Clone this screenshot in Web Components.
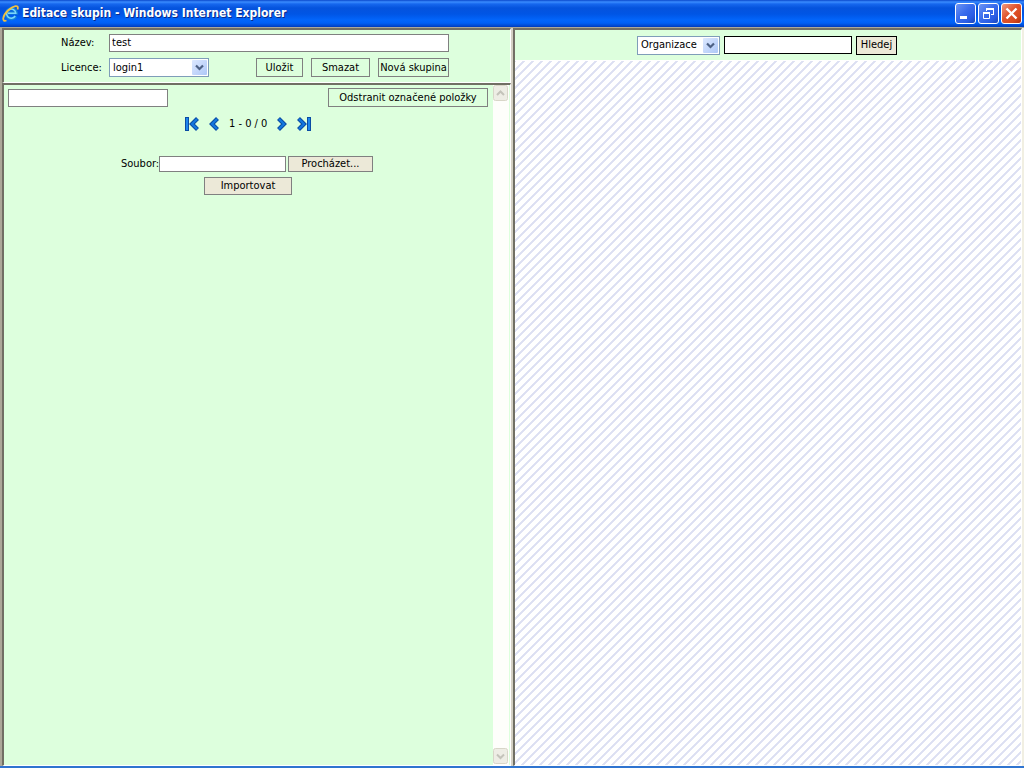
<!DOCTYPE html>
<html lang="cs"><head><meta charset="utf-8"><title>Editace skupin</title>
<style>
html,body{height:100%;margin:0}
body{font:11px/14px "DejaVu Sans Condensed","Open Sans",sans-serif;color:#000}
</style></head><body><app-window></app-window>
<script>
const define=(name,html,init)=>customElements.define(name,class extends HTMLElement{
  constructor(){super();const t=document.createElement('template');t.innerHTML=html;
    this.attachShadow({mode:'open'}).append(t.content.cloneNode(true));if(init)init(this,this.shadowRoot);}
});

define('ie-logo',`<style>:host{display:block;width:17px;height:17px}svg{display:block}</style>
<svg width="17" height="17" viewBox="0 0 17 17" fill="none" aria-hidden="true">
<path d="M13.800 11.200a5 5 0 1 1 .6-3.200H5.500" stroke="#1684d4" stroke-width="3.200"/>
<path d="M13.200 11a4.600 4.600 0 1 1 .6-2.800H6" stroke="#7cd6fb" stroke-width="1.500"/>
<path d="M4.500 15.500C-.5 17.500.5 10.500 6 5.500 11 .6 17.500-1 15.500 4.500" stroke="#f0c040" stroke-width="1.800"/>
</svg>`);

define('caption-button',`<style>
:host{display:block}
button{box-sizing:border-box;display:block;width:21px;height:21px;padding:0;border:1px solid #fff;border-radius:3px;background:linear-gradient(135deg,#6c94f4,#3a6cec 45%,#2a5ce4 75%,#1a46b8)}
:host([danger]) button{background:linear-gradient(135deg,#f09a80,#e0532c 45%,#d84a20 75%,#b03010)}
svg{display:block}
</style><button type="button"><svg width="19" height="19" viewBox="0 0 19 19" fill="none" stroke="#fff"></svg></button>`,
(el,r)=>{const k=el.getAttribute('kind');
 r.querySelector('button').setAttribute('aria-label',k);
 r.querySelector('svg').innerHTML={
  minimize:'<path d="M4 13.500h7" stroke-width="3"/>',
  restore:'<path d="M7 5h8" stroke-width="2"/><path d="M14.500 5v6M12 10.500h3M7.500 5v2"/><path d="M4 9h7" stroke-width="2"/><path d="M4.500 8v6.500h6V8"/>',
  close:'<path d="M4.500 4.500l10 10M14.500 4.500l-10 10" stroke-width="2.400"/>'}[k];});

define('title-bar',`<style>
:host{box-sizing:border-box;display:flex;align-items:center;height:27px;padding:0 2px 1px;gap:2px;color:#fff;
background:linear-gradient(#0a48cc 0,#3a8cff 2px,#1667ee 4px,#0553dd 8px,#0055e5 14px,#0265fb 20px,#0060f6 23px,#0046cc 26px,#0038ba 27px)}
h1{margin:0;flex:1;padding-left:1px;font:bold 12px/16px "DejaVu Sans Condensed",sans-serif;text-shadow:1px 1px #0a2a88}
</style><ie-logo></ie-logo><h1>Editace skupin - Windows Internet Explorer</h1>
<caption-button kind="minimize"></caption-button><caption-button kind="restore"></caption-button><caption-button kind="close" danger></caption-button>`);

define('flat-button',`<style>
:host{display:block;height:19px}
button{box-sizing:border-box;display:block;width:100%;height:100%;padding:0;border:1px solid var(--edge,#808080);background:var(--face,transparent);font:inherit;color:inherit;white-space:nowrap}
</style><button type="button"><slot></slot></button>`);

define('text-field',`<style>
:host{display:flex;align-items:center}
label{flex:none;width:var(--label,auto)}
input{box-sizing:border-box;flex:1;min-width:0;height:var(--h,18px);margin:0;padding:0 2px;border:1px solid var(--edge,#808080);border-radius:0;background:#fff;font:inherit;color:inherit;outline:0}
</style><label for="i"></label><input id="i" type="text">`,(el,r)=>{
 const l=r.querySelector('label'),i=r.querySelector('input');
 if(el.hasAttribute('label'))l.textContent=el.getAttribute('label');else{l.remove();i.setAttribute('aria-label',el.getAttribute('name'));}
 i.value=el.getAttribute('value')||'';});

define('drop-down',`<style>
:host{display:flex;align-items:center}
label{flex:none;width:var(--label,auto)}
.box{display:grid;flex:1}
.box>*{grid-area:1/1}
select{appearance:none;box-sizing:border-box;width:100%;height:var(--h,19px);margin:0;padding:0 20px 0 3px;border:1px solid #7f9db9;border-radius:0;background:#fff;font:inherit;color:inherit;outline:0}
svg{justify-self:end;align-self:center;margin-right:2px;pointer-events:none}
</style><label for="s"></label><div class="box"><select id="s"><option></option></select>
<svg width="15" height="15" viewBox="0 0 15 15"><defs><linearGradient id="g" x2="1" y2="1"><stop stop-color="#dce8ff"/><stop offset="1" stop-color="#aec8f7"/></linearGradient></defs><rect width="15" height="15" rx="1" fill="url(#g)"/><path d="M4 5.500l3.500 3.500L11 5.500" fill="none" stroke="#4d6185" stroke-width="2.200"/></svg></div>`,(el,r)=>{
 const l=r.querySelector('label');
 if(el.hasAttribute('label'))l.textContent=el.getAttribute('label');else{l.remove();r.querySelector('select').setAttribute('aria-label',el.getAttribute('name'));}
 r.querySelector('option').textContent=el.getAttribute('value');});

define('group-form',`<style>
:host{box-sizing:border-box;display:block;height:52px;padding:3px 61px 0 57px;background:#dfd;--label:48px}
.row{display:flex;gap:8px;height:19px;margin-top:6px}
text-field{height:19px}
drop-down{width:148px;margin-right:auto}
</style>
<text-field label="Název:" value="test"></text-field>
<div class="row"><drop-down label="Licence:" value="login1"></drop-down>
<flat-button style="width:47px">Uložit</flat-button><flat-button style="width:59px">Smazat</flat-button><flat-button style="width:71px">Nová skupina</flat-button></div>`);

define('pager-icon',`<style>:host{display:block}button{display:block;padding:0;border:0;background:none}svg{display:block}</style>
<button type="button"><svg width="14" height="14" viewBox="0 0 14 14" fill="none"></svg></button>`,(el,r)=>{
 const k=el.getAttribute('kind'),s=r.querySelector('svg');
 const chevron=x=>`<path d="M${x+6.5} 1.500L${x+1} 7l5.500 5.500" stroke="#0a4ca4" stroke-width="4.200"/><path d="M${x+6} 2L${x+1} 7l5 5" stroke="#1478e0" stroke-width="2"/>`;
 const end=k==='first'||k==='last';
 s.innerHTML=(k==='next'||k==='last'?'<g transform="matrix(-1 0 0 1 14 0)">':'<g>')+chevron(end?6:4)+(end?'<path d="M2 0v14" stroke="#0a4ca4" stroke-width="4"/><path d="M2 1v12" stroke="#1e86ec" stroke-width="2"/>':'')+'</g>';
 r.querySelector('button').setAttribute('aria-label',k);});

define('page-nav',`<style>:host{display:flex;justify-content:center;align-items:center;gap:8px;height:14px}span{width:38px;text-align:center;white-space:nowrap}</style>
<pager-icon kind="first"></pager-icon><pager-icon kind="previous"></pager-icon><span>1 - 0 / 0</span><pager-icon kind="next"></pager-icon><pager-icon kind="last"></pager-icon>`);

define('scroll-rail',`<style>
:host{display:flex;flex-direction:column;justify-content:space-between;width:16px;background:#fefefb}
svg{display:block}
</style>
<svg width="16" height="17" viewBox="0 0 16 17"><rect x=".5" y=".5" width="14" height="15" rx="2" fill="#eeede5" stroke="#d8d6c8"/><path d="M4 10l3.500-3.500L11 10" fill="none" stroke="#c4c3ba" stroke-width="2"/></svg>
<svg width="16" height="17" viewBox="0 0 16 17"><rect x=".5" y=".5" width="14" height="15" rx="2" fill="#eeede5" stroke="#d8d6c8"/><path d="M4 6.500l3.500 3.500L11 6.500" fill="none" stroke="#c4c3ba" stroke-width="2"/></svg>`);

define('group-items',`<style>
:host{display:flex;flex:1;min-height:0;background:#dfd}
main{flex:1;padding:3px 5px 0 4px}
.row{display:flex;justify-content:space-between;align-items:center}
page-nav{margin:10px 0 25px}
.file{display:flex;justify-content:center;align-items:center;gap:2px;height:16px;padding-right:2px}
.send{width:88px;height:18px;margin:5px auto 0}
.file,.send{--face:#ece9d8}
.file flat-button{height:16px;width:85px}
.file text-field{--h:16px;width:165px}
scroll-rail{margin-right:1px}
</style><main>
<div class="row"><text-field name="Filtr" style="width:160px"></text-field><flat-button style="width:160px">Odstranit označené položky</flat-button></div>
<page-nav></page-nav>
<div class="file"><text-field label="Soubor:"></text-field><flat-button>Procházet...</flat-button></div>
<flat-button class="send">Importovat</flat-button>
</main><scroll-rail></scroll-rail>`);

define('search-bar',`<style>
:host{display:flex;justify-content:center;align-items:center;gap:4px;height:30px;padding-right:2px;background:#dfd;--edge:#000;--face:#ece9d8;--h:19px}
</style><drop-down name="Typ" value="Organizace" style="width:83px;flex:none"></drop-down><text-field name="Hledaný text" style="width:128px;--h:18px"></text-field><flat-button style="width:41px">Hledej</flat-button>`);

define('frame-pane',`<style>
:host{box-sizing:border-box;display:flex;flex-direction:column;min-width:0;min-height:0;border:solid;border-width:2px 1px 1px 2px;border-color:#716f64 #fff #fff #716f64}
</style><slot></slot>`);

define('app-window',`<style>
:host{display:flex;flex-direction:column;min-height:100vh;background:#d4d0c4}
.panes{flex:1;display:grid;grid-template-columns:1fr 1fr;gap:2px;padding:0 2px;border-top:1px solid #aca899;border-bottom:2px solid #2f74d0;background:linear-gradient(90deg,#aca899 0 2px,#d4d0c4 2px calc(100% - 2px),#f1efe2 calc(100% - 2px))}
.left{display:grid;grid-template-rows:auto 1fr;min-width:0}
.stripes{flex:1;border-top:1px solid #fff;background:linear-gradient(135deg,#dcdff2 0 5%,#fff 10% 40%,#dcdff2 45% 55%,#fff 60% 90%,#dcdff2 95%) 0 0/9px 9px}
</style><title-bar></title-bar>
<div class="panes"><div class="left"><frame-pane><group-form></group-form></frame-pane><frame-pane><group-items></group-items></frame-pane></div>
<frame-pane><search-bar></search-bar><div class="stripes"></div></frame-pane></div>`);
</script></body></html>
